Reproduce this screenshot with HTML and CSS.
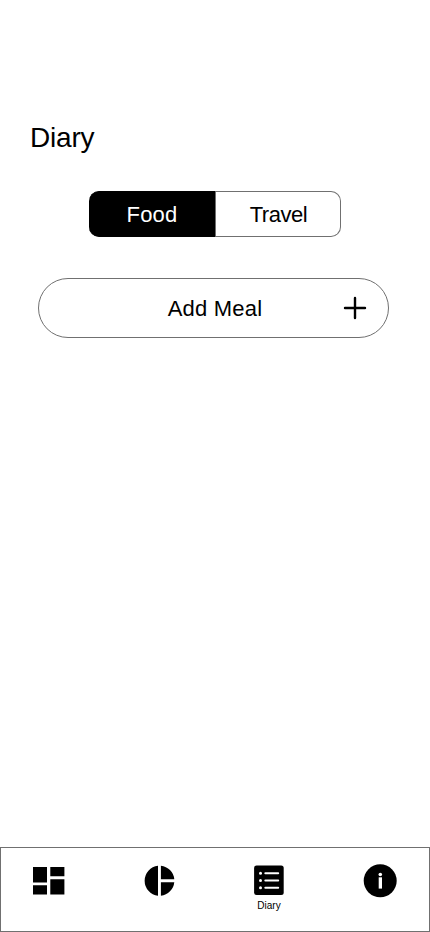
FILE: index.html
```html
<!DOCTYPE html>
<html lang="en">
<head>
<meta charset="utf-8">
<meta name="viewport" content="width=device-width, initial-scale=1">
<title>Diary</title>
<link rel="stylesheet" href="styles.css">
</head>
<body>
<div class="screen">
  <main class="content">
    <h1 class="title">Diary</h1>
    <div class="segments">
      <button class="segment active">Food</button>
      <button class="segment travel">Travel</button>
    </div>
    <button class="add">
      <span class="add-label">Add Meal</span>
      <svg class="plus" viewBox="0 0 24 24"><path d="M12 2v20M2 12h20"/></svg>
    </button>
  </main>
  <nav class="tabs">
    <a class="tab" aria-label="Dashboard">
      <svg width="104" height="36" viewBox="1 863 104 36"><path d="M33 867h14v15.4H33zM33 885.3h14v9.3H33zM50.3 867h14.1v9.2H50.3zM50.3 879.2h14.1v15.4H50.3z"/></svg>
    </a>
    <a class="tab" aria-label="Statistics">
      <svg width="110" height="36" viewBox="105 863 110 36"><path d="M158 865.7v30a15.1 15.1 0 0 1 0-30zM160.9 865.7a15.1 15.1 0 0 1 13.4 13.5h-13.4zM160.9 882.2h13.4a15.1 15.1 0 0 1-13.4 13.5z"/></svg>
    </a>
    <a class="tab" aria-label="Diary">
      <svg width="110" height="36" viewBox="215 863 110 36"><rect x="254.1" y="865.4" width="29.6" height="29.6" rx="2.5"/><path class="rows" d="M265.3 873.2h12.9M265.3 880.5h12.9M265.3 887.8h12.9"/><g class="dots"><circle cx="260.5" cy="873.2" r="1.5"/><circle cx="260.5" cy="880.5" r="1.5"/><circle cx="260.5" cy="887.8" r="1.5"/></g></svg>
      <span class="tab-label">Diary</span>
    </a>
    <a class="tab" aria-label="Information">
      <svg width="104" height="36" viewBox="325 863 104 36"><circle cx="380.2" cy="880.8" r="16.5"/><g class="dots"><circle cx="380.3" cy="874.5" r="1.8"/><path d="M378.7 877.3h3.3v11.3h-3.3z"/></g></svg>
    </a>
  </nav>
</div>
</body>
</html>
```

FILE: styles.css
```css
* { box-sizing: border-box; }
body {
  margin: 0;
  background: #fff;
  color: #000;
  font-family: "Liberation Sans", Arial, sans-serif;
}
button {
  margin: 0;
  padding: 0;
  background: #fff;
  color: #000;
  font: 22px/26px "Liberation Sans", Arial, sans-serif;
}
.screen {
  display: flex;
  flex-direction: column;
  height: 932px;
}
.content {
  flex: 1;
  padding: 122px 41px 0 38px;
}
.title {
  margin: 0 0 37px -8px;
  font-size: 28px;
  line-height: 32px;
  font-weight: 400;
  letter-spacing: -0.2px;
}
.segments {
  display: flex;
  width: 252px;
  height: 46px;
  margin: 0 0 41px 51px;
}
.segment {
  flex: 1;
  padding-top: 2px;
  border: 1px solid #707070;
  border-left-width: 0;
  border-radius: 0 10px 10px 0;
}
.segment.travel {
  padding-left: 1px;
  letter-spacing: -0.45px;
}
.segment.active {
  flex: 0 0 127px;
  background: #000;
  color: #fff;
  border-color: #000;
  border-right-color: #707070;
  border-radius: 10px 0 0 10px;
  letter-spacing: 0.2px;
}
.add {
  display: grid;
  grid-template-columns: 1fr 24px;
  align-items: center;
  width: 351px;
  height: 60px;
  padding: 0 21px;
  border: 1px solid #707070;
  border-radius: 30px;
}
.add-label {
  padding: 2px 0 0 27px;
  letter-spacing: 0.2px;
}
.plus {
  width: 24px;
  height: 24px;
  fill: none;
  stroke: #000;
  stroke-width: 2.4;
  stroke-linecap: round;
}
.tabs {
  display: grid;
  grid-template-columns: 104px 110px 110px 104px;
  height: 85px;
  padding-top: 15px;
  border: 1px solid #707070;
}
.tab {
  display: flex;
  flex-direction: column;
}
.tab-label {
  padding-right: 2px;
  font-size: 10px;
  line-height: 14px;
  text-align: center;
}
.rows {
  stroke: #fff;
  stroke-width: 2;
  stroke-linecap: round;
}
.dots { fill: #fff; }
```
